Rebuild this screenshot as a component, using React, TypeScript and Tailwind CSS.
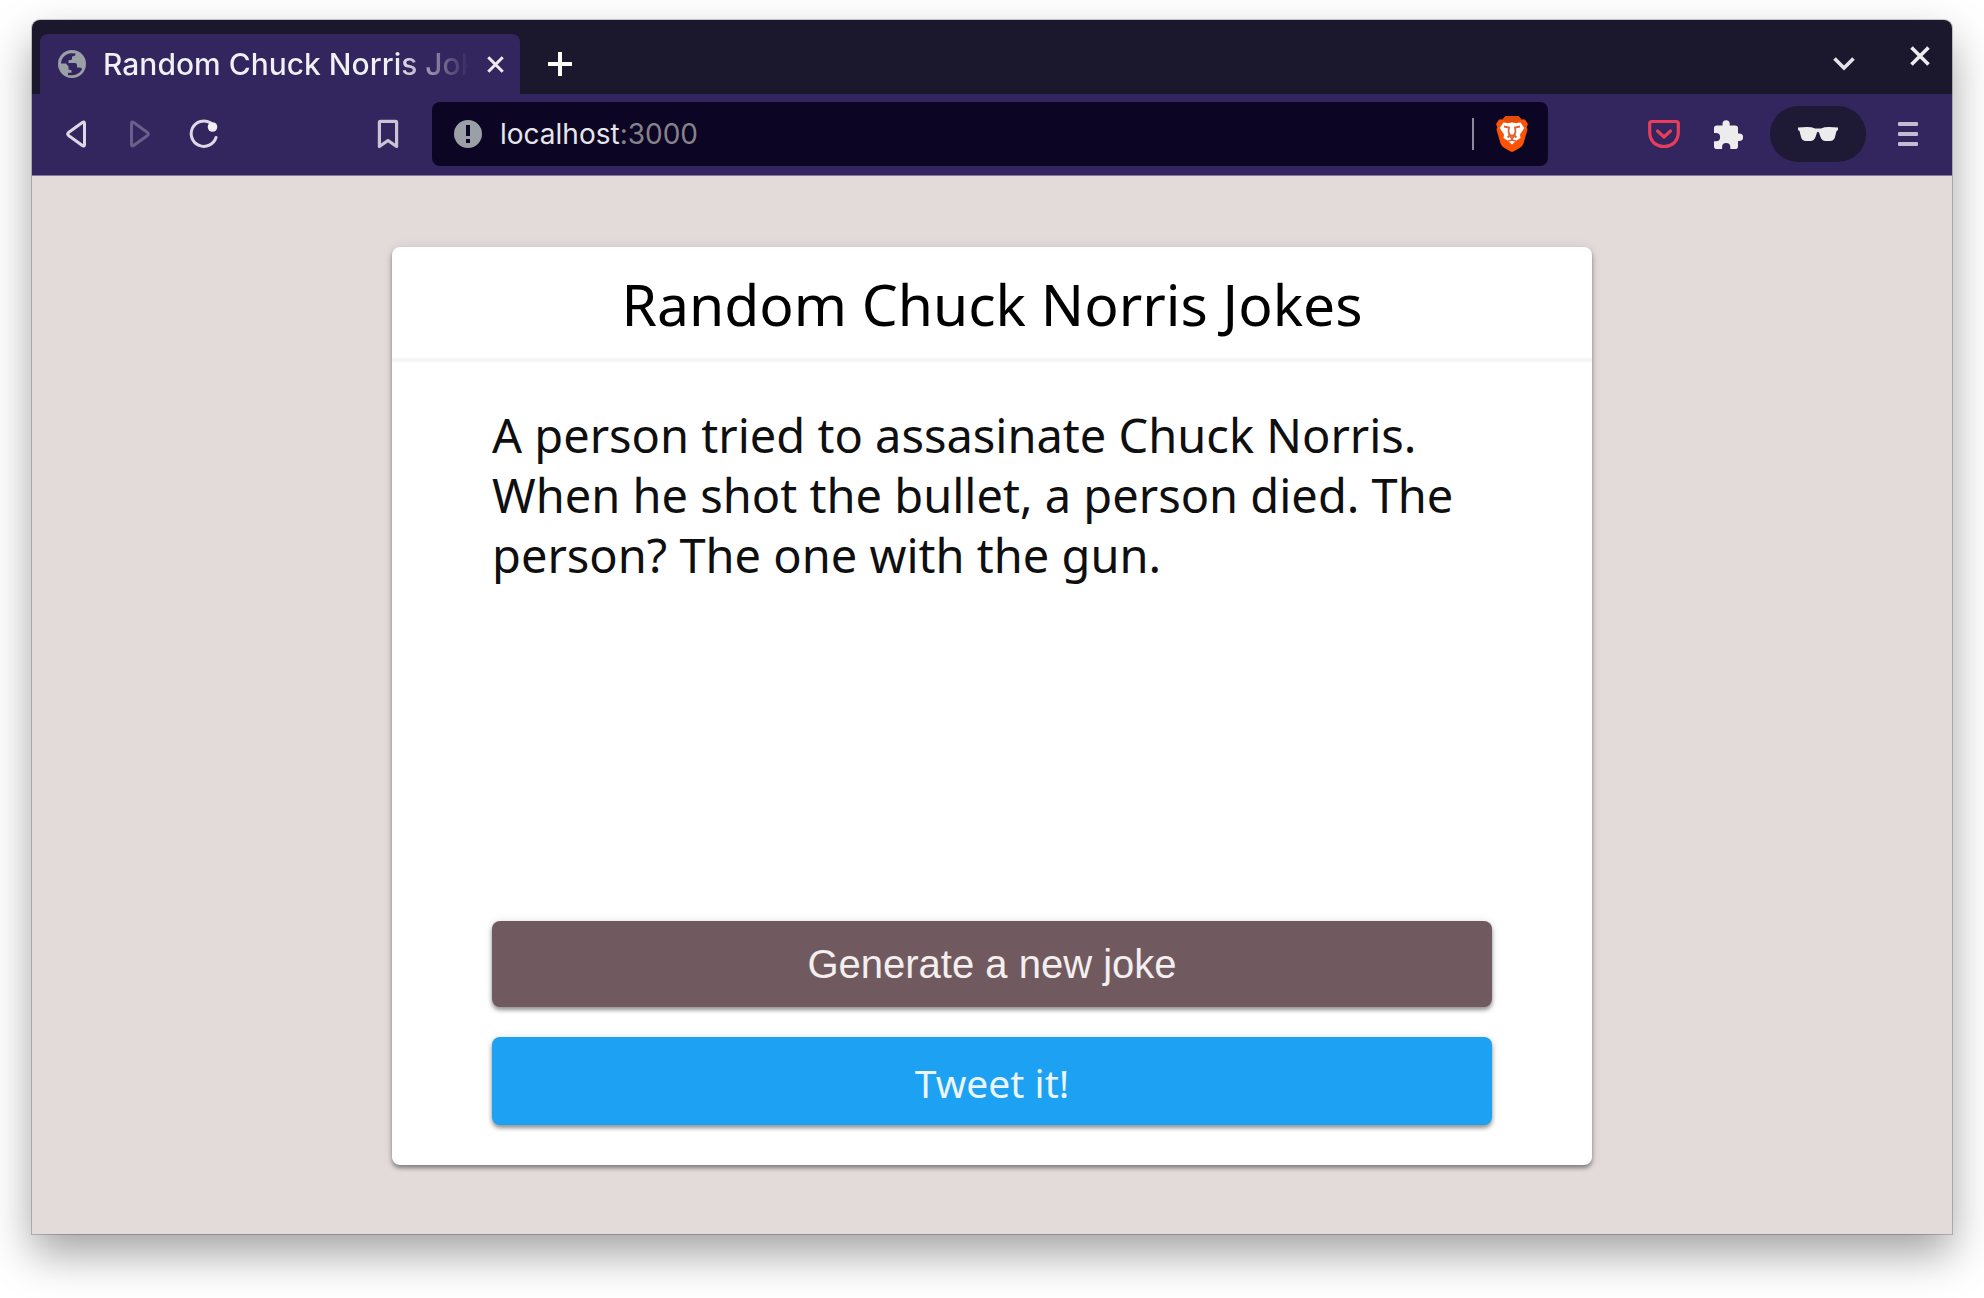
import React from 'react';

const GlobeIcon = () => (
  <svg width="28" height="28" viewBox="0 0 28 28" className="shrink-0">
    <circle cx="14" cy="14" r="14" fill="#9aa0a6" />
    <path
      d="M3 13.5C3.2 8 7 4.2 12.5 3.2L17.5 3.5C17.5 5.5 16.500 6.5 14 6.5V8.8C14 10 12.5 10.2 10.5 10.2V13H17C18.5 13 19 14 19 15.5V17.5H21.5C23 17.5 24 18.3 24 19C22.5 22.5 19 25 14.5 25.2H10V22.8H13.5V20.2L10.5 19.5V16.5L8 13.5Z"
      fill="#33255e"
    />
  </svg>
);

const BackIcon = () => (
  <svg width="24" height="30" viewBox="0 0 24 30" fill="none" stroke="#dcd9e4" strokeWidth="3" strokeLinejoin="round">
    <path d="M20.5 4.5V25.5Q20.5 28.2 18 26.3L4.5 16.5Q2.8 15 4.5 13.5L18 3.7Q20.5 1.8 20.5 4.5Z" />
  </svg>
);

const ForwardIcon = () => (
  <svg width="24" height="30" viewBox="0 0 24 30" fill="none" stroke="#6a5f8a" strokeWidth="3" strokeLinejoin="round">
    <path d="M3.5 4.5V25.5Q3.5 28.2 6 26.3L19.5 16.5Q21.2 15 19.5 13.5L6 3.7Q3.5 1.8 3.5 4.5Z" />
  </svg>
);

const ReloadIcon = () => (
  <svg width="30" height="30" viewBox="0 0 30 30" fill="none">
    <path d="M21.5 3.8A12.7 12.7 0 1 0 27 18.5" stroke="#dcd9e4" strokeWidth="3" strokeLinecap="round" />
    <circle cx="23.5" cy="8" r="4.8" fill="#f0eff4" />
  </svg>
);

const BookmarkIcon = () => (
  <svg width="22" height="30" viewBox="0 0 22 30" fill="none" stroke="#c9c4d6" strokeWidth="3.2" strokeLinejoin="round">
    <path d="M2.4 3.5Q2.4 2.4 3.5 2.4H18.5Q19.6 2.4 19.6 3.5V27.5L11 21.5L2.4 27.5Z" />
  </svg>
);

const InfoIcon = () => (
  <svg width="28" height="28" viewBox="0 0 28 28" className="shrink-0">
    <circle cx="14" cy="14" r="14" fill="#9aa0a6" />
    <path d="M12 5H16V16H12ZM12 19H16V23H12Z" fill="#0c0523" />
  </svg>
);

const BraveIcon = () => (
  <svg width="32" height="36" viewBox="0 0 32 36">
    <path d="M9.5 0H22.5L25.5 3.5L29 3.5L32 8L30.8 11L31.5 13.5L27.5 27.5Q26.5 30 24 31.8L17.5 35.6Q16 36.4 14.5 35.6L8 31.8Q5.5 30 4.5 27.5L0.5 13.5L1.2 11L0 8L3 3.5L6.5 3.5Z" fill="#fb5406" />
    <path d="M9.5 0H22.5L25.5 3.5L22 6H10L6.5 3.5Z" fill="#e34b08" />
    <path d="M7.5 6.5L12 7.3L16 6.5L20 7.3L24.5 6.5L28.3 12L24 18.5L24.5 22L20.5 24.5L16 28.5L11.5 24.5L7.5 22L8 18.5L3.7 12Z" fill="#fff" />
    <path d="M8 10.5L13 11.5L12.5 16L14 19.5L11.5 21.5M24 10.5L19 11.5L19.5 16L18 19.5L20.5 21.5M13.5 19.5H18.5L16 22.5ZM16 22V24L12 25M16 24L20 25" fill="none" stroke="#e0612f" strokeWidth="1.8" />
  </svg>
);

const PocketIcon = () => (
  <svg width="32" height="30" viewBox="0 0 32 30" fill="none" stroke="#e63e5c" strokeWidth="3.2" strokeLinejoin="round" strokeLinecap="round">
    <path d="M3.7 2.5H28.3Q30.3 2.5 30.3 4.5V13Q30.3 19.5 26.5 23.500Q22 27.500 16 27.5Q10 27.5 5.5 23.5Q1.7 19.5 1.7 13V4.5Q1.7 2.5 3.7 2.5Z" />
    <path d="M9.5 12L16 18L22.5 12" />
  </svg>
);

const PuzzleIcon = () => (
  <svg width="29" height="29" viewBox="0 0 29 29" fill="#ececec">
    <path d="M8.5 5.5V3.8A3.6 3.6 0 0 1 15.7 3.8V5.5H21.2Q24 5.5 24 8.3V13.5H25.4A3.7 3.7 0 0 1 25.4 20.9H24V26.2Q24 29 21.2 29H16.3V27A4.1 4.1 0 0 0 8.1 27V29H2.8Q0 29 0 26.2V21.3H2A4.1 4.1 0 0 0 2 13.1H0V8.3Q0 5.5 2.8 5.5Z" />
  </svg>
);

const GlassesIcon = () => (
  <svg width="40" height="14" viewBox="0 0 40 14" fill="#ececec">
    <path d="M0 0.5L9 0Q14 0 17 1.4H23Q26 0 31 0L40 0.5V3L38.5 4L37 10Q36 14 32 14H27.5Q24 14 22.5 10L21 5.5Q20 4 19 5.5L17.5 10Q16 14 12.5 14H8Q4 14 3 10L1.5 4L0 3Z" />
  </svg>
);

const MenuIcon = () => (
  <svg width="20" height="24" viewBox="0 0 20 24" fill="#c2bdd0">
    <rect y="0" width="20" height="4" rx="1" />
    <rect y="10" width="20" height="4" rx="1" />
    <rect y="20" width="20" height="4" rx="1" />
  </svg>
);

const CrossIcon = ({ size }: { size: number }) => (
  <svg width={size} height={size} viewBox="0 0 20 20" stroke="#ececf0" strokeWidth="3.6">
    <path d="M1.5 1.5L18.5 18.5M18.5 1.5L1.5 18.5" />
  </svg>
);

const TabStrip = () => (
  <div className="flex h-[74px] items-end bg-[#1b182e] pl-2 pr-[22px]">
    <div className="flex h-[60px] w-[480px] items-center rounded-t-lg bg-[#33255e] pl-[18px] pr-4">
      <GlobeIcon />
      <span className="ml-[17px] min-w-0 flex-1 overflow-hidden whitespace-nowrap bg-linear-to-r from-[#f1f0f5] from-80% to-transparent bg-clip-text font-['Inter',sans-serif] text-[30px] font-medium leading-[40px] text-transparent">
        Random Chuck Norris Jokes
      </span>
      <button aria-label="Close tab" className="ml-[18px]">
        <CrossIcon size={17} />
      </button>
    </div>
    <button aria-label="New tab" className="mb-[18px] ml-7">
      <svg width="24" height="24" viewBox="0 0 24 24" stroke="#fff" strokeWidth="4">
        <path d="M12 0V24M0 12H24" />
      </svg>
    </button>
    <div className="ml-auto flex h-full items-center gap-[55px] pb-0.5">
      <button aria-label="Search tabs" className="mt-4">
        <svg width="22" height="14" viewBox="0 0 22 14" fill="none" stroke="#e4e4e8" strokeWidth="3.6">
          <path d="M1.5 1.5L11 11L20.5 1.5" />
        </svg>
      </button>
      <button aria-label="Close window">
        <CrossIcon size={20} />
      </button>
    </div>
  </div>
);

const Toolbar = () => (
  <div className="flex h-[82px] items-center border-b border-[#8578a0] bg-[#33255e] pb-px pl-8 pr-[34px]">
    <button aria-label="Back"><BackIcon /></button>
    <button aria-label="Forward" disabled className="ml-10"><ForwardIcon /></button>
    <button aria-label="Reload" className="ml-[37px]"><ReloadIcon /></button>
    <button aria-label="Bookmark" className="ml-[158px]"><BookmarkIcon /></button>
    <div className="ml-[33px] flex h-16 flex-1 items-center rounded-lg bg-[#0c0523] pl-[22px] pr-5">
      <InfoIcon />
      <div className="ml-[18px] flex-1 font-['Inter',sans-serif] text-[28px] leading-[40px] text-[#85828c]">
        <span className="text-[#e6e5ea]">localhost</span>:3000
      </div>
      <div className="mr-[22px] h-8 w-0.5 bg-[#8e8a99]"></div>
      <button aria-label="Brave Shields"><BraveIcon /></button>
    </div>
    <button aria-label="Save to Pocket" className="ml-[100px]"><PocketIcon /></button>
    <button aria-label="Extensions" className="ml-[34px]"><PuzzleIcon /></button>
    <button aria-label="Private window" className="ml-[27px] flex h-14 w-24 items-center justify-center rounded-full bg-[#1e1935]">
      <GlassesIcon />
    </button>
    <button aria-label="Menu" className="ml-8"><MenuIcon /></button>
  </div>
);

const JokeCard = () => (
  <section className="flex w-[1200px] max-w-full flex-col rounded-lg bg-white font-['Noto_Sans',sans-serif] text-black shadow-[0_3px_4px_rgba(0,0,0,0.4),0_0_12px_rgba(0,0,0,0.08)]">
    <h1 className="border-b-4 border-[#f5f5f5] pb-4 pt-[19px] text-center text-[57px] leading-[76px]">
      Random Chuck Norris Jokes
    </h1>
    <div className="flex flex-1 flex-col px-[100px] pb-10 pt-[43px]">
      <p className="flex-1 text-[47px] leading-[60px] text-[#0f0f0f]">
        A person tried to assasinate Chuck Norris. When he shot the bullet, a person died. The person? The one with the gun.
      </p>
      <button className="mb-[30px] h-[86px] rounded-lg bg-[#715a5f] font-['Liberation_Sans',sans-serif] text-[40px] text-[#f3efef] shadow-[0_3px_4px_rgba(0,0,0,0.4),0_0_8px_rgba(0,0,0,0.1)]">
        Generate a new joke
      </button>
      <a
        href="#tweet"
        className="flex h-[88px] items-center justify-center rounded-lg bg-[#1da1f2] pt-1 text-[39px] text-[#eaf5fd] shadow-[0_3px_4px_rgba(0,0,0,0.4),0_0_8px_rgba(0,0,0,0.1)]"
      >
        Tweet it!
      </a>
    </div>
  </section>
);

const App: React.FC = () => {
  return (
    <div className="flex min-h-screen flex-col bg-white px-8 pb-16 pt-5">
      <div className="flex flex-1 flex-col overflow-hidden rounded-t-lg shadow-[0_0_0_1px_rgba(0,0,0,0.2),0_20px_44px_rgba(0,0,0,0.36)]">
        <TabStrip />
        <Toolbar />
        <main className="flex flex-1 justify-center bg-[#e3dada] pb-[69px] pt-[71px]">
          <JokeCard />
        </main>
      </div>
    </div>
  );
};

export default App;
